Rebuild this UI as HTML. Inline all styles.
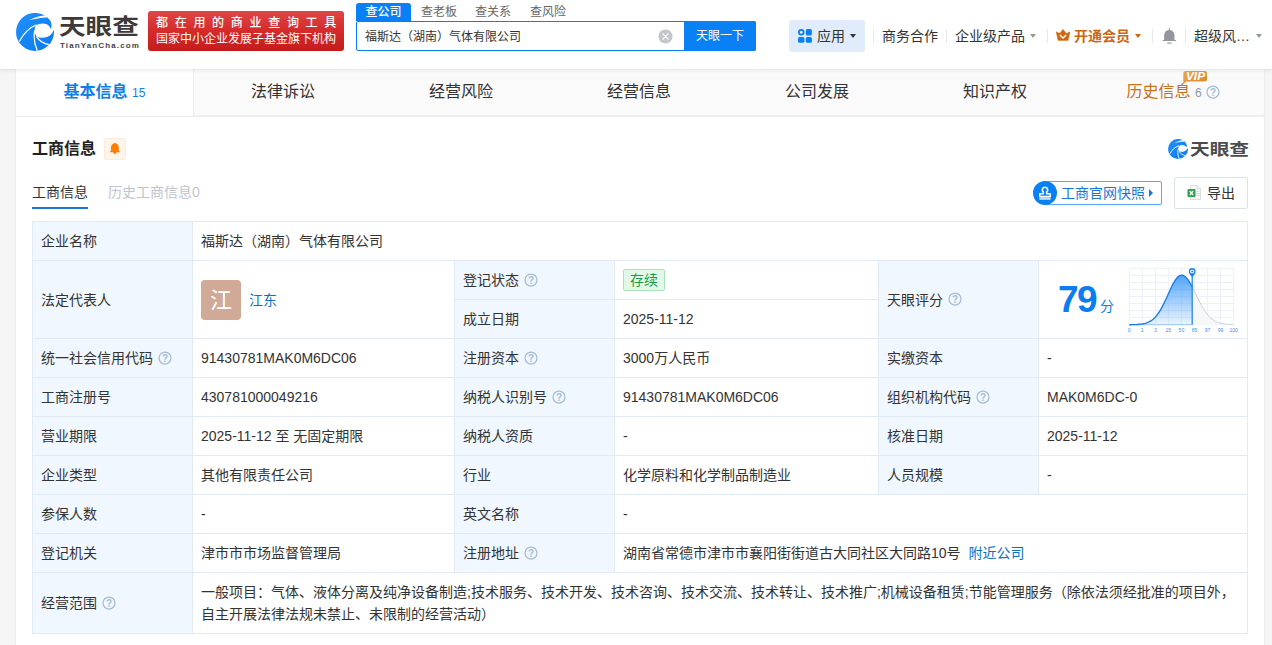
<!DOCTYPE html>
<html lang="zh-CN">
<head>
<meta charset="utf-8">
<title>福斯达（湖南）气体有限公司 - 天眼查</title>
<style>
*{box-sizing:border-box;margin:0;padding:0}
html,body{width:1272px;height:645px;overflow:hidden}
body{background:#f5f5f5;font-family:"Liberation Sans","Noto Sans CJK SC",sans-serif;font-size:14px;color:#333;position:relative}
.abs{position:absolute;white-space:nowrap}
/* header */
#hdr{position:absolute;left:0;top:0;width:1272px;height:69px;background:#fff;box-shadow:0 1px 4px rgba(0,0,0,.10);z-index:5}
#banner{left:148px;top:11px;width:196px;height:40px;border-radius:3px;background:linear-gradient(180deg,#e14646 0%,#d42a2a 50%,#c41c1c 100%);color:#fff;font-size:13px;line-height:16px;padding:4px 0 0 8px}
#banner div{white-space:nowrap}
#banner .l1{font-size:12px;letter-spacing:6.700px;font-weight:500}
#banner .l2{font-size:12px;letter-spacing:0}
.stab{top:3px;height:18px;line-height:18px;font-size:12px;color:#666}
.stab.on{left:356px;width:55px;background:#0a80f5;color:#fff;text-align:center;border-radius:3px 3px 0 0;font-weight:500}
#sbox{left:356px;top:21px;width:400px;height:30px;border:1px solid #0a80f0;border-radius:2px;background:#fff}
#sbox .q{left:8px;top:1px;line-height:28px;font-size:12px;color:#333}
#sbtn{left:684px;top:21px;width:72px;height:30px;background:#0a80f5;color:#fff;font-size:12px;line-height:30px;text-align:center;border-radius:0 2px 2px 0}
.nav{top:26px;line-height:20px;font-size:14px;color:#333}
.sep{position:absolute;top:29px;width:1px;height:14px;background:#e9e9e9}
.caret{position:absolute;width:0;height:0;border-left:3.5px solid transparent;border-right:3.5px solid transparent;border-top:4px solid #999;top:34px}
/* tabs */
#tabs{position:absolute;left:16px;top:69px;width:1248px;height:47px;background:#fafafa;border-bottom:1px solid #efefef;border-radius:0 0 3px 0}
.tab{position:absolute;top:0;height:47px;width:178px;text-align:center;line-height:45px;font-size:16px;color:#333;white-space:nowrap}
.tab.on{background:#fff;border-right:1px solid #eee;height:47px;color:#0f80e6;font-weight:700}
.tab small{font-size:12px;font-weight:400}
/* card */
#card{position:absolute;left:16px;top:117px;width:1248px;height:540px;background:#fff}
#edgeL{position:absolute;left:15px;top:69px;width:1250px;height:600px;background:#eee}
h2{font-size:16px;font-weight:700;color:#222}
table{position:absolute;left:32px;top:221px;width:1216px;border-collapse:collapse;table-layout:fixed;font-size:14px;color:#333}
td{border:1px solid #e2ebf5;height:39px;padding:0 8px;vertical-align:middle;white-space:nowrap;line-height:22px}
td.k{background:#f0f7fe;color:#333}
.qi{display:inline-block;vertical-align:-2px;margin-left:5px;position:relative;top:-.5px}
a{color:#0a6fc8;text-decoration:none}
.ava{display:inline-block;width:40px;height:40px;border-radius:4px;background:#d0a997;color:#fff;font-size:22px;line-height:41px;text-align:center;vertical-align:middle;margin-right:8px}
.tag{display:inline-block;height:22px;line-height:20px;padding:0 6px;border:1px solid #a9e3b9;background:#e2f9e8;color:#1f9a48;border-radius:2px;font-size:14px}
</style>
</head>
<body>

<div id="hdr">
  <!-- logo -->
  <svg class="abs" style="left:16px;top:13px" width="38" height="38" viewBox="58 55 532 532">
    <defs><linearGradient id="lg" x1="0" y1="0" x2="1" y2="1"><stop offset="0" stop-color="#2290fa"/><stop offset="1" stop-color="#0a7bf0"/></linearGradient></defs>
    <circle cx="324" cy="320" r="266" fill="url(#lg)"/>
    <path d="M620 170 L543 170 C558 210 558 248 546 278 C534 248 515 226 488 212 C445 192 380 198 332 232 C313 270 312 335 347 387 C390 407 450 407 500 387 C545 367 572 337 583 297 L620 297 Z" fill="#fff"/>
    <path d="M478 88 C400 95 320 118 240 157 C320 137 400 121 492 117 Z" fill="#fff"/>
    <path d="M105 452 C160 350 240 262 345 220" fill="none" stroke="#fff" stroke-width="17"/>
    <path d="M357 584 C320 500 300 400 320 300" fill="none" stroke="#fff" stroke-width="17"/>
    <path d="M345 385 C380 440 440 482 522 498" fill="none" stroke="#fff" stroke-width="16"/>
  </svg>
  <div class="abs" id="lt" style="left:59px;top:11px;font-size:22px;line-height:32px;font-weight:700;color:#3d3a39;transform-origin:0 0;transform:scaleX(1.21)">天眼查</div>
  <div class="abs" id="lt2" style="left:60px;top:41px;font-size:8px;line-height:10px;font-weight:700;color:#444;letter-spacing:1.120px">TianYanCha.com</div>

  <div id="banner" class="abs"><div class="l1">都在用的商业查询工具</div><div class="l2">国家中小企业发展子基金旗下机构</div></div>

  <div class="abs stab on">查公司</div>
  <div class="abs stab" style="left:421px">查老板</div>
  <div class="abs stab" style="left:475px">查关系</div>
  <div class="abs stab" style="left:530px">查风险</div>
  <div id="sbox" class="abs"><div class="abs q">福斯达（湖南）气体有限公司</div>
    <svg class="abs" style="left:300.500px;top:6.500px" width="15" height="15" viewBox="0 0 16 16"><circle cx="8" cy="8" r="7.500" fill="#c4c6cc"/><path d="M5.200 5.200 L10.800 10.800 M10.800 5.200 L5.200 10.800" stroke="#fff" stroke-width="1.500" stroke-linecap="round"/></svg>
  </div>
  <div id="sbtn" class="abs">天眼一下</div>

  <div class="abs" style="left:789px;top:20px;width:76px;height:32px;background:#e0ecfb;border-radius:3px"></div>
  <svg class="abs" style="left:798px;top:29px" width="14" height="14" viewBox="0 0 14 14"><circle cx="3.250" cy="3.350" r="2.300" fill="#fff" stroke="#0a80f5" stroke-width="1.900"/><rect x="7.800" y="0.100" width="6.100" height="6.500" rx="1.600" fill="#0a80f5"/><rect x="0" y="8" width="6.400" height="5.800" rx="1.600" fill="#0a80f5"/><rect x="7.800" y="8" width="6.100" height="5.800" rx="1.600" fill="#0a80f5"/></svg>
  <div class="abs nav" style="left:817px">应用</div><i class="caret" style="left:850px;border-top-color:#333"></i>
  <i class="sep" style="left:873px"></i>
  <div class="abs nav" style="left:882px">商务合作</div>
  <i class="sep" style="left:946px"></i>
  <div class="abs nav" style="left:955px">企业级产品</div><i class="caret" style="left:1030px"></i>
  <i class="sep" style="left:1047px"></i>
  <svg class="abs" style="left:1056px;top:29.400px" width="14.200" height="11.600" viewBox="0 0 14.200 11.600"><path d="M0.100 2.800 L3.800 4.400 L7 0.200 L10.300 4.400 L14.100 2.800 L12.100 11.400 L2.100 11.400 Z" fill="#cd680f" stroke="#cd680f" stroke-width=".4" stroke-linejoin="round"/><path d="M3.900 5.900 L7 9 L10.200 5.900" stroke="#fff" stroke-width="1.400" fill="none"/></svg>
  <div class="abs nav" style="left:1074px;color:#cb670f;font-weight:700">开通会员</div><i class="caret" style="left:1135px;border-top-color:#cb670f"></i>
  <i class="sep" style="left:1152px"></i>
  <svg class="abs" style="left:1162px;top:28px" width="15" height="17" viewBox="0 0 15 17"><path d="M6.800 0.300 h1.050 v1.600 C10.600 2.200 12.500 4.600 12.500 7.200 V12 H14.100 V12.900 H0.600 V12 H2.100 V7.200 C2.100 4.600 4 2.200 6.800 1.900 Z" fill="#93979d"/><rect x="5.200" y="14.200" width="4.300" height="1.700" fill="#b4b7bb"/></svg>
  <i class="sep" style="left:1185px"></i>
  <div class="abs nav" style="left:1194px">超级风…</div><i class="caret" style="left:1256px"></i>
</div>

<div id="edgeL"></div>
<div id="tabs">
  <div class="tab on" style="left:0">基本信息 <small>15</small></div>
  <div class="tab" style="left:178px">法律诉讼</div>
  <div class="tab" style="left:356px">经营风险</div>
  <div class="tab" style="left:534px">经营信息</div>
  <div class="tab" style="left:712px">公司发展</div>
  <div class="tab" style="left:890px">知识产权</div>
  <div class="tab" style="left:1068px;color:#c8721a">历史信息 <small style="color:#8c98aa">6</small><svg class="qi" style="margin-left:4px" width="14" height="14" viewBox="0 0 14 14"><circle cx="7" cy="7" r="6" fill="none" stroke="#a6bcd6" stroke-width="1.250"/><text x="7" y="10.500" text-anchor="middle" font-size="10" font-weight="700" fill="#a6bcd6" font-family="Liberation Sans, sans-serif">?</text></svg></div>
</div>

<div id="card"></div>

<h2 class="abs" style="left:32px;top:137px;line-height:24px">工商信息</h2>


<!-- title bell -->
<div class="abs" style="left:104px;top:138px;width:22px;height:22px;background:#fff4ea;border:1px solid #fdecdc;border-radius:2px"></div>
<svg class="abs" style="left:109px;top:142px" width="12" height="13" viewBox="0 0 12 13"><path d="M5.900 0.700 C6.400 0.700 6.700 1 6.800 1.500 C8.700 2 9.800 3.600 9.800 5.600 L9.800 8.200 L10.700 9.600 L10.700 10.200 L7.600 10.200 C7.400 11.200 6.800 11.900 5.900 11.900 C5 11.900 4.400 11.200 4.200 10.200 L1.100 10.200 L1.100 9.600 L2 8.200 L2 5.600 C2 3.600 3.100 2 5 1.500 C5.100 1 5.400 0.700 5.900 0.700Z" fill="#ff7d00"/></svg>

<!-- small logo right -->
<svg class="abs" style="left:1168px;top:139px" width="20" height="20" viewBox="58 55 532 532">
    <circle cx="324" cy="320" r="266" fill="url(#lg)"/>
    <path d="M620 170 L548 170 C562 210 560 250 546 282 C534 252 515 236 488 226 C445 210 390 216 345 246 C330 280 332 335 360 378 C400 396 450 396 495 378 C540 360 570 335 583 297 L620 297 Z" fill="#fff"/>
    <path d="M478 84 C400 92 320 116 236 160 C320 142 400 128 494 124 Z" fill="#fff"/>
    <path d="M105 452 C160 350 240 268 350 232" fill="none" stroke="#fff" stroke-width="24"/>
    <path d="M357 584 C322 500 305 400 335 300" fill="none" stroke="#fff" stroke-width="24"/>
    <path d="M352 378 C385 440 440 482 522 498" fill="none" stroke="#fff" stroke-width="22"/>
  </svg>
<div class="abs" style="left:1189.500px;top:137px;font-size:16px;line-height:26px;font-weight:700;color:#4c4c4c;transform-origin:0 0;transform:scaleX(1.23)">天眼查</div>

<!-- sub tabs -->
<div class="abs" style="left:32px;top:182px;font-size:14px;line-height:20px;color:#333">工商信息</div>
<div class="abs" style="left:32px;top:207px;width:56px;height:2px;background:#1c78d0"></div>
<div class="abs" style="left:108px;top:182px;font-size:14px;line-height:20px;color:#c0c4cc">历史工商信息0</div>

<!-- snapshot btn -->
<div class="abs" style="left:1044px;top:181px;width:118px;height:24px;border:1px solid #5aa9f5;border-radius:2px;background:#fff"></div>
<div class="abs" style="left:1033px;top:181px;width:24px;height:24px;border-radius:12px;background:#0a80f5"></div>
<svg class="abs" style="left:1038px;top:185.500px" width="14" height="15" viewBox="0 0 14 15"><path d="M7 1.300 A2.700 2.700 0 0 1 8.700 6.100 L8.700 7.800 L12.200 7.800 L12.200 10.600 L1.800 10.600 L1.800 7.800 L5.300 7.800 L5.300 6.100 A2.700 2.700 0 0 1 7 1.300Z" fill="none" stroke="#fff" stroke-width="1.600" stroke-linejoin="round"/><rect x="1.400" y="11.600" width="11.200" height="2.200" fill="#fff" fill-opacity=".75"/></svg>
<div class="abs" style="left:1061px;top:183px;font-size:14px;line-height:20px;color:#1a78d4">工商官网快照</div>
<div class="abs" style="left:1149px;top:189px;width:0;height:0;border-top:4px solid transparent;border-bottom:4px solid transparent;border-left:4.500px solid #1a78d4"></div>

<!-- export btn -->
<div class="abs" style="left:1174px;top:177px;width:74px;height:32px;border:1px solid #dde1e9;border-radius:2px;background:#fff"></div>
<svg class="abs" style="left:1187px;top:185px" width="14" height="15" viewBox="0 0 14 15"><path d="M3.500 0.500 L10 0.500 L13.500 4 L13.500 14.500 L3.500 14.500Z" fill="#fafafa" stroke="#d4d4d4" stroke-width="0.800"/><path d="M10 0.500 L10 4 L13.500 4" fill="#eee" stroke="#d4d4d4" stroke-width="0.800"/><path d="M9.500 6.500h3M9.500 8.500h3M9.500 10.500h3" stroke="#cfd8cf" stroke-width="0.900"/><rect x="0.500" y="4" width="8" height="8" rx="1" fill="#2fa04e"/><path d="M2.800 6 L6.200 10 M6.200 6 L2.800 10" stroke="#fff" stroke-width="1.200"/></svg>
<div class="abs" style="left:1207px;top:183px;font-size:14px;line-height:20px;color:#333">导出</div>

<!-- VIP -->
<svg class="abs" style="left:1183px;top:71px" width="25" height="14" viewBox="0 0 25 14"><defs><linearGradient id="vg" x1="0" y1="0" x2="1" y2="1"><stop offset="0" stop-color="#eba750"/><stop offset="1" stop-color="#d8882c"/></linearGradient></defs><path d="M2 0 L22 0 A2 2 0 0 1 24 2 L24 8.500 A2 2 0 0 1 22 10.500 L3.200 10.500 L0.300 13.500 L0.300 2 A2 2 0 0 1 2 0Z" fill="url(#vg)"/><text x="3" y="8.900" textLength="19" lengthAdjust="spacingAndGlyphs" font-size="10" font-weight="700" font-style="italic" fill="#fff" font-family="Liberation Sans, sans-serif">VIP</text></svg>
<div class="abs" style="left:1058px;top:278px;font-size:37px;line-height:44px;font-weight:700;color:#0b7df0;letter-spacing:-1.500px">79</div>
<div class="abs" style="left:1100px;top:296px;font-size:14px;line-height:20px;color:#0b7df0">分</div>
<svg class="abs" style="left:1124px;top:262px;overflow:visible" width="120" height="76" viewBox="-5.200 -6.300 120 76">
<defs><linearGradient id="cg" x1="0" y1="0" x2="0" y2="1"><stop offset="0" stop-color="#3b99f8" stop-opacity=".88"/><stop offset="1" stop-color="#3b99f8" stop-opacity=".10"/></linearGradient></defs>
<g stroke="#e9f1fb" stroke-width="1"><line x1="0.00" y1="0" x2="0.00" y2="56.4"/><line x1="13.05" y1="0" x2="13.05" y2="56.4"/><line x1="26.10" y1="0" x2="26.10" y2="56.4"/><line x1="39.15" y1="0" x2="39.15" y2="56.4"/><line x1="52.20" y1="0" x2="52.20" y2="56.4"/><line x1="65.25" y1="0" x2="65.25" y2="56.4"/><line x1="78.30" y1="0" x2="78.30" y2="56.4"/><line x1="91.35" y1="0" x2="91.35" y2="56.4"/><line x1="104.40" y1="0" x2="104.40" y2="56.4"/><line x1="0" y1="0.00" x2="104.4" y2="0.00"/><line x1="0" y1="7.05" x2="104.4" y2="7.05"/><line x1="0" y1="14.10" x2="104.4" y2="14.10"/><line x1="0" y1="21.15" x2="104.4" y2="21.15"/><line x1="0" y1="28.20" x2="104.4" y2="28.20"/><line x1="0" y1="35.25" x2="104.4" y2="35.25"/><line x1="0" y1="42.30" x2="104.4" y2="42.30"/><line x1="0" y1="49.35" x2="104.4" y2="49.35"/><line x1="0" y1="56.40" x2="104.4" y2="56.40"/></g>
<path d="M63.0 18.6 L64.0 20.5 L66.0 24.5 L68.0 28.6 L70.0 32.7 L72.0 36.5 L74.0 40.0 L76.0 43.1 L78.0 45.9 L80.0 48.2 L82.0 50.1 L84.0 51.7 L86.0 53.0 L88.0 53.9 L90.0 54.6 L92.0 55.2 L94.0 55.6 L96.0 55.8 L98.0 56.0 L100.0 56.2 L102.0 56.2 L104.0 56.3 L104.4 56.3 L104.4 56.4 L63 56.4 Z" fill="#f6f7f9"/>
<path d="M63.0 18.6 L64.0 20.5 L66.0 24.5 L68.0 28.6 L70.0 32.7 L72.0 36.5 L74.0 40.0 L76.0 43.1 L78.0 45.9 L80.0 48.2 L82.0 50.1 L84.0 51.7 L86.0 53.0 L88.0 53.9 L90.0 54.6 L92.0 55.2 L94.0 55.6 L96.0 55.8 L98.0 56.0 L100.0 56.2 L102.0 56.2 L104.0 56.3 L104.4 56.3" fill="none" stroke="#c9d2dc" stroke-width="1"/>
<path d="M0.0 56.4 L2.0 56.4 L4.0 56.3 L6.0 56.3 L8.0 56.2 L10.0 56.0 L12.0 55.8 L14.0 55.5 L16.0 55.1 L18.0 54.4 L20.0 53.6 L22.0 52.4 L24.0 50.9 L26.0 49.0 L28.0 46.6 L30.0 43.7 L32.0 40.4 L34.0 36.6 L36.0 32.5 L38.0 28.2 L40.0 23.7 L42.0 19.4 L44.0 15.4 L46.0 12.0 L48.0 9.3 L50.0 7.6 L52.0 6.9 L54.0 7.2 L56.0 8.5 L58.0 10.5 L60.0 13.3 L62.0 16.7 L63.0 18.6 L63 56.4 Z" fill="url(#cg)"/>
<path d="M0.0 56.4 L2.0 56.4 L4.0 56.3 L6.0 56.3 L8.0 56.2 L10.0 56.0 L12.0 55.8 L14.0 55.5 L16.0 55.1 L18.0 54.4 L20.0 53.6 L22.0 52.4 L24.0 50.9 L26.0 49.0 L28.0 46.6 L30.0 43.7 L32.0 40.4 L34.0 36.6 L36.0 32.5 L38.0 28.2 L40.0 23.7 L42.0 19.4 L44.0 15.4 L46.0 12.0 L48.0 9.3 L50.0 7.6 L52.0 6.9 L54.0 7.2 L56.0 8.5 L58.0 10.5 L60.0 13.3 L62.0 16.7 L63.0 18.6" fill="none" stroke="#1b7fe6" stroke-width="1.400"/>
<line x1="0" y1="56.4" x2="63" y2="56.4" stroke="#1b7fe6" stroke-width="1" stroke-opacity=".35"/>
<line x1="63" y1="6" x2="63" y2="56.4" stroke="#1b7fe6" stroke-width="1.200"/>
<path d="M63 9 C61 6.500 59.600 5.200 59.600 3.200 A3.400 3.400 0 1 1 66.400 3.200 C66.400 5.200 65 6.500 63 9Z" fill="#1b7fe6"/>
<circle cx="63" cy="3.200" r="2.100" fill="#fff"/><circle cx="63" cy="3.200" r="1" fill="#1b7fe6"/>
<g font-size="5" fill="#3a8eea" font-family="Liberation Sans, sans-serif"><text x="0.00" y="63.700" text-anchor="middle">0</text><text x="13.05" y="63.700" text-anchor="middle">1</text><text x="26.10" y="63.700" text-anchor="middle">3</text><text x="39.15" y="63.700" text-anchor="middle">15</text><text x="52.20" y="63.700" text-anchor="middle">50</text><text x="65.25" y="63.700" text-anchor="middle">85</text><text x="78.30" y="63.700" text-anchor="middle">97</text><text x="91.35" y="63.700" text-anchor="middle">99</text><text x="104.40" y="63.700" text-anchor="middle">100</text></g>
</svg>
<table>
<colgroup><col style="width:160px"><col style="width:262px"><col style="width:160px"><col style="width:264px"><col style="width:160px"><col style="width:209px"></colgroup>
<tr><td class="k">企业名称</td><td colspan="5">福斯达（湖南）气体有限公司</td></tr>
<tr><td class="k" rowspan="2">法定代表人</td><td rowspan="2"><span class="ava">江</span><a style="position:relative;top:2px">江东</a></td><td class="k">登记状态<svg class="qi" width="14" height="14" viewBox="0 0 14 14"><circle cx="7" cy="7" r="6" fill="none" stroke="#a6bcd6" stroke-width="1.250"/><text x="7" y="10.500" text-anchor="middle" font-size="10" font-weight="700" fill="#a6bcd6" font-family="Liberation Sans, sans-serif">?</text></svg></td><td><span class="tag">存续</span></td><td class="k" rowspan="2">天眼评分<svg class="qi" width="14" height="14" viewBox="0 0 14 14"><circle cx="7" cy="7" r="6" fill="none" stroke="#a6bcd6" stroke-width="1.250"/><text x="7" y="10.500" text-anchor="middle" font-size="10" font-weight="700" fill="#a6bcd6" font-family="Liberation Sans, sans-serif">?</text></svg></td><td rowspan="2"></td></tr>
<tr><td class="k">成立日期</td><td>2025-11-12</td></tr>
<tr><td class="k">统一社会信用代码<svg class="qi" width="14" height="14" viewBox="0 0 14 14"><circle cx="7" cy="7" r="6" fill="none" stroke="#a6bcd6" stroke-width="1.250"/><text x="7" y="10.500" text-anchor="middle" font-size="10" font-weight="700" fill="#a6bcd6" font-family="Liberation Sans, sans-serif">?</text></svg></td><td>91430781MAK0M6DC06</td><td class="k">注册资本<svg class="qi" width="14" height="14" viewBox="0 0 14 14"><circle cx="7" cy="7" r="6" fill="none" stroke="#a6bcd6" stroke-width="1.250"/><text x="7" y="10.500" text-anchor="middle" font-size="10" font-weight="700" fill="#a6bcd6" font-family="Liberation Sans, sans-serif">?</text></svg></td><td>3000万人民币</td><td class="k">实缴资本</td><td>-</td></tr>
<tr><td class="k">工商注册号</td><td>430781000049216</td><td class="k">纳税人识别号<svg class="qi" width="14" height="14" viewBox="0 0 14 14"><circle cx="7" cy="7" r="6" fill="none" stroke="#a6bcd6" stroke-width="1.250"/><text x="7" y="10.500" text-anchor="middle" font-size="10" font-weight="700" fill="#a6bcd6" font-family="Liberation Sans, sans-serif">?</text></svg></td><td>91430781MAK0M6DC06</td><td class="k">组织机构代码<svg class="qi" width="14" height="14" viewBox="0 0 14 14"><circle cx="7" cy="7" r="6" fill="none" stroke="#a6bcd6" stroke-width="1.250"/><text x="7" y="10.500" text-anchor="middle" font-size="10" font-weight="700" fill="#a6bcd6" font-family="Liberation Sans, sans-serif">?</text></svg></td><td>MAK0M6DC-0</td></tr>
<tr><td class="k">营业期限</td><td>2025-11-12 至 无固定期限</td><td class="k">纳税人资质</td><td>-</td><td class="k">核准日期</td><td>2025-11-12</td></tr>
<tr><td class="k">企业类型</td><td>其他有限责任公司</td><td class="k">行业</td><td>化学原料和化学制品制造业</td><td class="k">人员规模</td><td>-</td></tr>
<tr><td class="k">参保人数</td><td>-</td><td class="k">英文名称</td><td colspan="3">-</td></tr>
<tr><td class="k">登记机关</td><td>津市市市场监督管理局</td><td class="k">注册地址<svg class="qi" width="14" height="14" viewBox="0 0 14 14"><circle cx="7" cy="7" r="6" fill="none" stroke="#a6bcd6" stroke-width="1.250"/><text x="7" y="10.500" text-anchor="middle" font-size="10" font-weight="700" fill="#a6bcd6" font-family="Liberation Sans, sans-serif">?</text></svg></td><td colspan="3">湖南省常德市津市市襄阳街街道古大同社区大同路10号 <a style="margin-left:4px">附近公司</a></td></tr>
<tr><td class="k" style="height:61px">经营范围<svg class="qi" width="14" height="14" viewBox="0 0 14 14"><circle cx="7" cy="7" r="6" fill="none" stroke="#a6bcd6" stroke-width="1.250"/><text x="7" y="10.500" text-anchor="middle" font-size="10" font-weight="700" fill="#a6bcd6" font-family="Liberation Sans, sans-serif">?</text></svg></td><td colspan="5" style="white-space:normal">一般项目：气体、液体分离及纯净设备制造;技术服务、技术开发、技术咨询、技术交流、技术转让、技术推广;机械设备租赁;节能管理服务（除依法须经批准的项目外，自主开展法律法规未禁止、未限制的经营活动）</td></tr>
</table>

</body>
</html>
